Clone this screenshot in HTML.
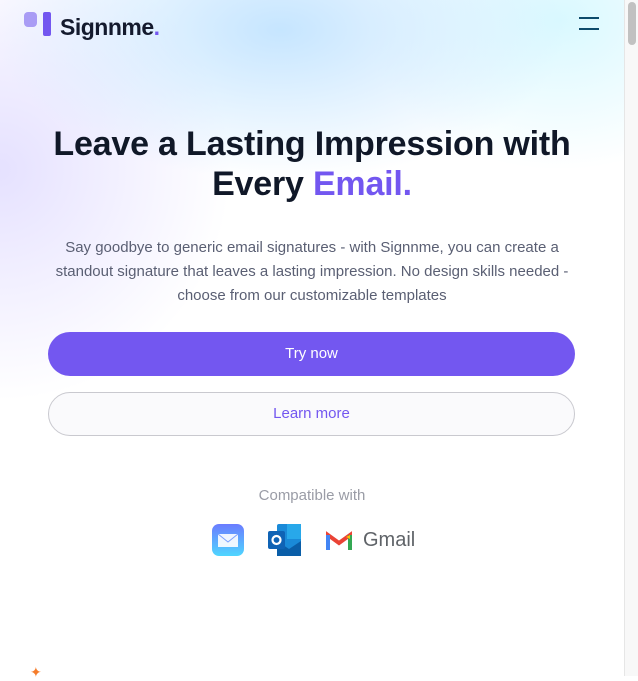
<!DOCTYPE html>
<html><head><meta charset="utf-8"><style>
html,body{margin:0;padding:0;width:638px;height:676px;overflow:hidden;font-family:"Liberation Sans",sans-serif;background:#fff}
.bg{position:absolute;left:0;top:0;width:624px;height:676px;background:
radial-gradient(ellipse 380px 200px at 280px 30px, rgba(195,228,255,0.95), rgba(255,255,255,0) 75%),
radial-gradient(ellipse 260px 200px at 560px 20px, rgba(215,248,255,0.95), rgba(255,255,255,0) 75%),
radial-gradient(ellipse 330px 330px at 0px 170px, rgba(225,220,255,0.85), rgba(255,255,255,0) 70%);}
.sb{position:absolute;left:624px;top:0;width:14px;height:676px;background:#f8f8f8;border-left:1px solid #e6e6e6}
.sb div{position:absolute;left:3px;top:2px;width:8px;height:43px;background:#c1c1c1;border-radius:4px}
.abs{position:absolute}
h1{position:absolute;left:0;width:624px;top:124px;margin:0;text-align:center;font-size:34px;line-height:40px;color:#101828;font-weight:bold;letter-spacing:-0.2px}
p{position:absolute;left:44px;width:536px;top:236px;margin:0;text-align:center;font-size:15px;line-height:24px;color:#5a5f73}
.btn{position:absolute;left:48px;width:527px;height:44px;border-radius:22px;text-align:center;line-height:44px;font-size:15px}
</style></head><body>
<div class="bg"></div>
<div class="abs" style="left:24px;top:12px;width:13px;height:15px;background:#a99cf5;border-radius:4px"></div>
<div class="abs" style="left:43px;top:12px;width:8px;height:24px;background:#7357f0;border-radius:2px"></div>
<div class="abs" style="left:60px;top:14px;font-size:23px;font-weight:bold;color:#141a2e;letter-spacing:-0.5px">Signnme<span style="color:#7357f0">.</span></div>
<div class="abs" style="left:579px;top:17px;width:20px;height:2px;background:#0d4a6b"></div>
<div class="abs" style="left:579px;top:28px;width:20px;height:2px;background:#0d4a6b"></div>
<h1>Leave a Lasting Impression with<br>Every <span style="color:#7357f0">Email.</span></h1>
<p>Say goodbye to generic email signatures - with Signnme, you can create a standout signature that leaves a lasting impression. No design skills needed - choose from our customizable templates</p>
<div class="btn" style="top:332px;background:#7357f0;color:#fff">Try now</div>
<div class="btn" style="top:392px;height:42px;line-height:42px;border:1px solid #c9c9cf;background:#fafafc;color:#7357f0;width:525px">Learn more</div>
<div class="abs" style="left:0;width:624px;top:487px;text-align:center;color:#9a9ca6;font-size:15px">Compatible with</div>
<div class="abs" style="left:212px;top:524px;width:32px;height:32px;border-radius:7px;background:linear-gradient(#6b7cff,#4fd6ff)">
<svg width="32" height="32"><rect x="6" y="10" width="20" height="13" fill="#fff" opacity=".9"/><path d="M6 10l10 8 10-8" stroke="#7aa0ff" fill="none"/></svg></div>
<svg class="abs" style="left:267px;top:523px" width="36" height="34"><rect x="10" y="1" width="24" height="32" rx="2" fill="#1a8ad8"/><rect x="20" y="1" width="14" height="15" fill="#28a8ea"/><path d="M10 18l12 8 12-8v15H10z" fill="#0a5ea8"/><rect x="1" y="8" width="17" height="18" rx="2" fill="#0f63b5"/><circle cx="9.5" cy="17" r="4" fill="none" stroke="#fff" stroke-width="2.2"/></svg>
<svg class="abs" style="left:326px;top:531px" width="26" height="19"><path d="M2 19V4l11 8 11-8v15" fill="none" stroke="#ea4335" stroke-width="4"/><path d="M2 19V4" stroke="#4285f4" stroke-width="4"/><path d="M24 19V4" stroke="#34a853" stroke-width="4"/><path d="M20 6l4-2v4" fill="#fbbc04"/></svg>
<div class="abs" style="left:363px;top:529px;font-size:20px;color:#5f6368">Gmail</div>
<div class="abs" style="left:30px;top:664px;color:#f57c2a;font-size:14px">✦</div>
<div class="sb"><div></div></div>
</body></html>
